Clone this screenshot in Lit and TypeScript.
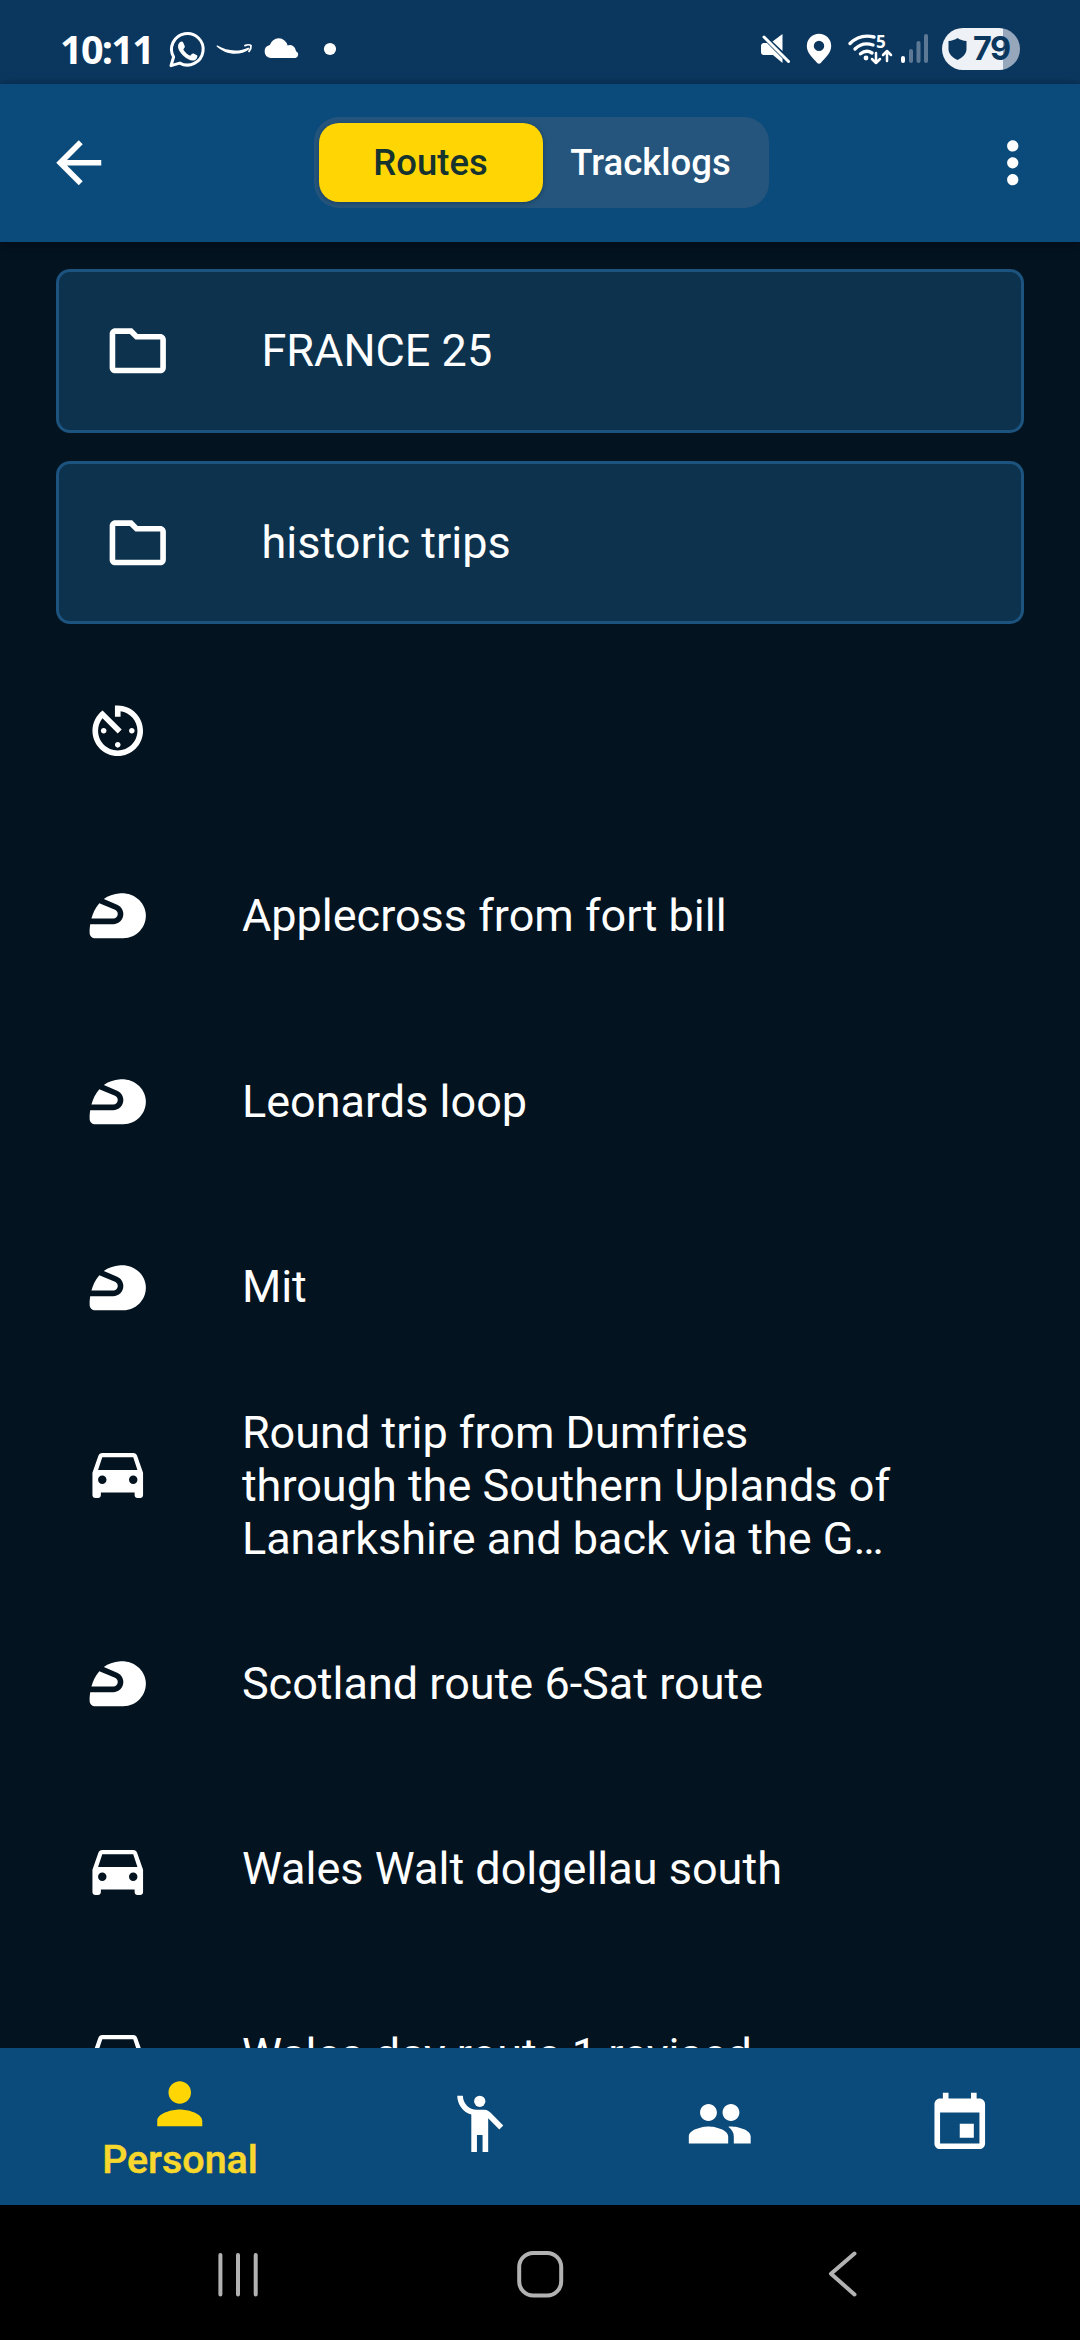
import { LitElement, html, svg, css } from "lit";
import { customElement, property, state } from "lit/decorators.js";
import { classMap } from "lit/directives/class-map.js";

const ICONS: Record<string, unknown> = {
  back: svg`<path d="M20 11H7.83l5.59-5.59L12 4l-8 8 8 8 1.41-1.41L7.83 13H20v-2z"/>`,
  more: svg`<path d="M12 8c1.1 0 2-.9 2-2s-.9-2-2-2-2 .9-2 2 .9 2 2 2zm0 2c-1.1 0-2 .9-2 2s.9 2 2 2 2-.9 2-2-.9-2-2-2zm0 6c-1.1 0-2 .9-2 2s.9 2 2 2 2-.9 2-2-.9-2-2-2z"/>`,
  folder: svg`<path d="M9.17 6l2 2H20v10H4V6h5.17M10 4H4c-1.1 0-1.99.9-1.99 2L2 18c0 1.1.9 2 2 2h16c1.1 0 2-.9 2-2V8c0-1.1-.9-2-2-2h-8l-2-2z"/>`,
  timer: svg`<path d="M11 17c0 .55.45 1 1 1s1-.45 1-1-.45-1-1-1-1 .45-1 1zm0-14v4h2V5.080c3.390.490 6 3.390 6 6.920 0 3.870-3.130 7-7 7s-7-3.130-7-7c0-1.680.590-3.220 1.580-4.420L12 13l1.410-1.410-6.800-6.800v.02C4.420 6.450 3 9.050 3 12c0 4.970 4.020 9 9 9 4.970 0 9-4.030 9-9s-4.030-9-9-9h-1zm7 9c0-.55-.45-1-1-1s-1 .45-1 1 .45 1 1 1 1-.45 1-1zM6 12c0 .55.45 1 1 1s1-.45 1-1-.45-1-1-1-1 .45-1 1z"/>`,
  helmet: svg`<path d="M12 11.390c0-.65-.39-1.230-.98-1.480L5.440 7.550c-1.480 1.680-2.320 3.700-2.800 5.450h7.750c.89 0 1.610-.72 1.610-1.610z"/><path d="M21.960 11.220c-.41-4.410-4.560-7.490-8.980-7.200-2.510.16-4.440.94-5.930 2.040l4.740 2.010c1.330.57 2.200 1.870 2.200 3.320 0 1.990-1.620 3.610-3.610 3.610H2.210C2 16.310 2 17.200 2 17.200v.8c0 1.100.9 2 2 2h10c4.670 0 8.410-4.010 7.960-8.780z"/>`,
  car: svg`<path d="M18.920 6.010C18.720 5.420 18.160 5 17.500 5h-11c-.66 0-1.210.42-1.420 1.010L3 12v8c0 .55.45 1 1 1h1c.55 0 1-.45 1-1v-1h12v1c0 .55.45 1 1 1h1c.55 0 1-.45 1-1v-8l-2.080-5.990zM6.500 16c-.83 0-1.500-.67-1.500-1.500S5.670 13 6.500 13s1.500.67 1.500 1.500S7.330 16 6.500 16zm11 0c-.83 0-1.500-.67-1.500-1.500s.67-1.500 1.500-1.500 1.500.67 1.500 1.500-.67 1.500-1.500 1.500zM5 11l1.500-4.500h11L19 11H5z"/>`,
  person: svg`<path d="M12 12c2.210 0 4-1.790 4-4s-1.790-4-4-4-4 1.790-4 4 1.790 4 4 4zm0 2c-2.670 0-8 1.340-8 4v2h16v-2c0-2.660-5.330-4-8-4z"/>`,
  wave: svg`<circle cx="12" cy="4" r="2"/><path d="M15.890 8.110C15.500 7.720 14.830 7 13.530 7h-2.540C8.240 6.990 6 4.750 6 2H4c0 3.160 2.110 5.840 5 6.710V22h2v-6h2v6h2V10.050L18.950 14l1.410-1.410-4.470-4.480z"/>`,
  group: svg`<path d="M16 11c1.660 0 2.990-1.340 2.990-3S17.660 5 16 5s-3 1.340-3 3 1.340 3 3 3zm-8 0c1.660 0 2.990-1.340 2.990-3S9.660 5 8 5 5 6.340 5 8s1.340 3 3 3zm0 2c-2.330 0-7 1.170-7 3.500V19h14v-2.500c0-2.330-4.670-3.500-7-3.500zm8 0c-.29 0-.62.02-.97.05 1.160.84 1.970 1.970 1.970 3.450V19h6v-2.500c0-2.330-4.670-3.500-7-3.500z"/>`,
  event: svg`<path d="M17 12h-5v5h5v-5zM16 1v2H8V1H6v2H5c-1.110 0-1.990.9-1.990 2L3 19c0 1.100.89 2 2 2h14c1.100 0 2-.9 2-2V5c0-1.100-.9-2-2-2h-1V1h-2zm3 18H5V8h14v11z"/>`,
};

@customElement("md-icon")
class MdIcon extends LitElement {
  static styles = css`
    :host { display: block; flex: none; width: 67.5px; height: 67.5px; }
    .glyph { display: block; width: 100%; height: 100%; fill: currentColor; }
  `;
  @property() name = "";
  render() {
    return html`<svg class="glyph" viewBox="0 0 24 24">${ICONS[this.name]}</svg>`;
  }
}

@customElement("status-bar")
class StatusBar extends LitElement {
  static styles = css`
    :host {
      display: flex; justify-content: space-between; align-items: flex-start;
      height: 84px; box-sizing: border-box; padding: 28px 60px 0 60px;
      background: #0b375f; color: #fff;
    }
    .side { display: flex; align-items: center; height: 42px; }
    .clock {
      font: 700 39.5px/42px "Open Sans", "Noto Sans", sans-serif;
      letter-spacing: -1.7px; width: 105px; white-space: nowrap;
    }
    .pic { display: block; flex: none; fill: #fff; }
    .line { fill: none; stroke: #fff; stroke-linecap: round; stroke-linejoin: round; }
    .faint { fill: #5d7894; }
    .five { font: 700 17px "Open Sans", sans-serif; fill: #fff; }
    .battery {
      display: flex; align-items: center; width: 78px; height: 42px; border-radius: 21px;
      background: linear-gradient(90deg, #eef1f6 61px, #96a6bb 61px);
      color: #0b375f; box-sizing: border-box; padding-left: 6px; gap: 6px;
    }
    .shield { display: block; fill: #0b375f; }
    .level { font: 700 32.5px/42px Inter, Roboto, sans-serif; letter-spacing: -1.6px; }
  `;
  render() {
    return html`
      <div class="side">
        <span class="clock">10:11</span>
        <svg class="pic" width="44" height="42" viewBox="165 28 44 42">
          <path class="line" stroke-width="3" d="M171 65.6l2.6-8.6a15.8 15.8 0 1 1 6.2 6.1z"/>
          <path d="M179.6 42.6c1.2-1.4 2.9-1.5 3.6 0l1.5 3.5c.4 1-.1 1.9-1.4 3.3 1.7 3.1 4 5.1 7 6.3 1.2-1.5 2-2.6 3.3-2.1l3.3 1.6c1.2.7 0 3.8-1.7 4.7-3.1 1.6-7.5-.2-11.3-3.6-4.2-3.7-8.100-9.600-4.300-13.700z"/>
        </svg>
        <svg class="pic" width="50" height="42" viewBox="209 28 50 42">
          <path d="M217 45.3c10.5 6.3 22.5 6.7 31.5 2.1l.9 1.500c-9 7.300-23.500 6.400-32.900-2.700z"/>
          <path class="line" stroke-width="1.8" d="M245 45.6c2-1 5-1 6 0 .3 1.900-.6 4-2 5.800"/>
        </svg>
        <svg class="pic" width="45" height="42" viewBox="259 28 45 42">
          <path d="M270.5 58a6.6 6.6 0 0 1-.7-13A9.200 9.200 0 0 1 287.600 45.500a6.300 6.300 0 0 1 8.500 5.700A3.600 3.600 0 0 1 295.400 58z"/>
        </svg>
        <svg class="pic" width="52" height="42" viewBox="304 28 52 42"><circle cx="330" cy="49" r="6.1"/></svg>
      </div>
      <div class="side">
        <svg class="pic" width="44" height="42" viewBox="755 28 44 42">
          <path d="M761 45.5a3 3 0 0 1 2.500-2.500H767l15.500 15.500V63l-9.500-8h-9a3 3 0 0 1-3-3zM772.500 41.500L782.500 34V51z"/>
          <path class="line" stroke-width="3" d="M764 37l24.500 24.500"/>
        </svg>
        <svg class="pic" width="42" height="42" viewBox="799 28 42 42">
          <path fill-rule="evenodd" d="M819 33.7a12.200 12.200 0 0 0-12.200 12.200c0 7 6.200 12 10.400 17 1 1.100 2.600 1.100 3.600 0 4.200-5 10.400-10 10.400-17A12.200 12.200 0 0 0 819 33.700zm0 7a5.200 5.200 0 1 1 0 10.400 5.200 5.200 0 0 1 0-10.400z"/>
        </svg>
        <svg class="pic" width="55" height="42" viewBox="841 28 55 42">
          <path class="line" stroke-width="3.4" d="M850 43.500c7-7 16-8.500 24-6.500M855 49c5.500-5.500 12-6 18-4M860.500 53.800c4-3.300 8-3.300 11.500-.8"/>
          <circle cx="866" cy="58" r="2.4"/>
          <path class="line" stroke-width="2.5" d="M876 53v10m-4-4l4 4 4-4M887 61V51m-4 4l4-4 4 4"/>
          <text class="five" x="876" y="47.5">5</text>
        </svg>
        <svg class="pic" width="46" height="42" viewBox="896 28 46 42">
          <rect x="901" y="56" width="4" height="7" rx="2"/>
          <rect class="faint" x="909" y="49" width="4" height="14" rx="2"/>
          <rect class="faint" x="916.5" y="41" width="4" height="22" rx="2"/>
          <rect class="faint" x="924" y="34" width="4" height="29" rx="2"/>
        </svg>
        <div class="battery">
          <svg class="shield" width="19" height="22" viewBox="0 0 19 22">
            <path d="M9.500 0c2.500 1.700 5.500 2.700 9 3v8c0 5-4 8.800-9 11-5-2.200-9-6-9-11V3c3.500-.3 6.500-1.300 9-3z"/>
          </svg>
          <span class="level">79</span>
        </div>
      </div>
    `;
  }
}

@customElement("segment-tabs")
class SegmentTabs extends LitElement {
  static styles = css`
    :host {
      display: flex; box-sizing: border-box; width: 455px; height: 91px;
      padding: 6px 10px 6px 5px; border-radius: 25px; background: #25557c;
    }
    .tab {
      display: flex; align-items: center; justify-content: center; flex: 1 1 216px;
      font: 500 36.5px/44px Roboto, sans-serif; color: #fff; border-radius: 20px;
    }
    .selected {
      flex: 0 0 224px; background: #ffd603; color: #16332f;
      box-shadow: 0 1px 4px rgba(0, 20, 40, 0.35);
    }
  `;
  @state() selected = "Routes";
  render() {
    return ["Routes", "Tracklogs"].map(
      (t) => html`<div class=${classMap({ tab: true, selected: t === this.selected })} @click=${() => (this.selected = t)}>${t}</div>`
    );
  }
}

@customElement("route-row")
class RouteRow extends LitElement {
  static styles = css`
    :host {
      display: flex; align-items: flex-start; flex: none; box-sizing: border-box;
      min-height: 185.6px; padding: 0 184px 0 84.4px; gap: 90px;
      font: 400 45px/53px Roboto, sans-serif; color: #fff;
    }
    md-icon { margin-top: 58.3px; }
    .name {
      display: -webkit-box; -webkit-box-orient: vertical; -webkit-line-clamp: 3;
      overflow: hidden; margin: 65px 0 0; flex: 1;
    }
    .tall { margin: 25px 0 27px; }
  `;
  @property() icon = "";
  @property() name = "";
  render() {
    return html`<md-icon name=${this.icon}></md-icon>
      <div class=${classMap({ name: true, tall: this.name.length > 40 })}>${this.name}</div>`;
  }
}

const ROUTES: [string, string][] = [
  ["timer", ""],
  ["helmet", "Applecross from fort bill"],
  ["helmet", "Leonards loop"],
  ["helmet", "Mit"],
  ["car", "Round trip from Dumfries through the Southern Uplands of Lanarkshire and back via the G…"],
  ["helmet", "Scotland route 6-Sat route"],
  ["car", "Wales Walt dolgellau south"],
  ["car", "Wales day route 1 revised"],
];

@customElement("app-root")
class AppRoot extends LitElement {
  static styles = css`
    :host {
      display: flex; flex-direction: column; width: 1080px; height: 2340px; overflow: hidden;
      background: #03131f; color: #fff; font-family: Roboto, sans-serif;
    }
    .appbar {
      display: flex; flex: none; align-items: center; justify-content: space-between;
      box-sizing: border-box; height: 157.5px; padding: 0 34px 0 45px;
      background: #0b4b7b; box-shadow: 0 2px 10px rgba(0, 5, 15, 0.5);
    }
    .switch { margin-right: 9px; }
    .list {
      display: flex; flex-direction: column; flex: 1; min-height: 0; overflow: hidden;
    }
    .folders { display: flex; flex-direction: column; flex: none; gap: 28px; padding: 27.5px 56px 14.5px; }
    .folder {
      display: flex; align-items: center; box-sizing: border-box; height: 163.5px;
      padding: 0 45px; gap: 90px; border: 3px solid #1c537f; border-radius: 14px;
      background: #0c324e; font: 400 45px/53px Roboto, sans-serif;
    }
    .tabs {
      display: grid; flex: none; grid-template-columns: 360px 240px 240px 240px;
      height: 157.5px; background: #0b4b7b;
    }
    .tab { display: flex; flex-direction: column; align-items: center; padding-top: 42px; }
    .active { padding-top: 22px; color: #ffd603; }
    .label { font: 500 39.4px/46px Roboto, sans-serif; color: #f8d82c; -webkit-text-stroke: 0.5px #f8d82c; }
    .keys { display: flex; flex: none; height: 135px; background: #000; }
    .key { display: block; fill: none; stroke: #b2b2b2; stroke-width: 4; stroke-linecap: round; stroke-linejoin: round; }
  `;
  render() {
    return html`
      <status-bar></status-bar>
      <div class="appbar">
        <md-icon name="back"></md-icon>
        <segment-tabs class="switch"></segment-tabs>
        <md-icon name="more"></md-icon>
      </div>
      <div class="list">
        <div class="folders">
          ${["FRANCE 25", "historic trips"].map(
            (f) => html`<div class="folder"><md-icon name="folder"></md-icon><span>${f}</span></div>`
          )}
        </div>
        ${ROUTES.map(([icon, name]) => html`<route-row icon=${icon} name=${name}></route-row>`)}
      </div>
      <div class="tabs">
        <div class="tab active"><md-icon name="person"></md-icon><span class="label">Personal</span></div>
        <div class="tab"><md-icon name="wave"></md-icon></div>
        <div class="tab"><md-icon name="group"></md-icon></div>
        <div class="tab"><md-icon name="event"></md-icon></div>
      </div>
      <div class="keys">
        <svg class="key" width="1080" height="135" viewBox="0 2205 1080 135">
          <path d="M220.4 2255v39.5M238 2255v39.5M255.7 2255v39.5"/>
          <rect x="519.2" y="2253" width="42" height="42.5" rx="14"/>
          <path d="M854.5 2253.5L831 2273.7l23.5 20.8"/>
        </svg>
      </div>
    `;
  }
}
